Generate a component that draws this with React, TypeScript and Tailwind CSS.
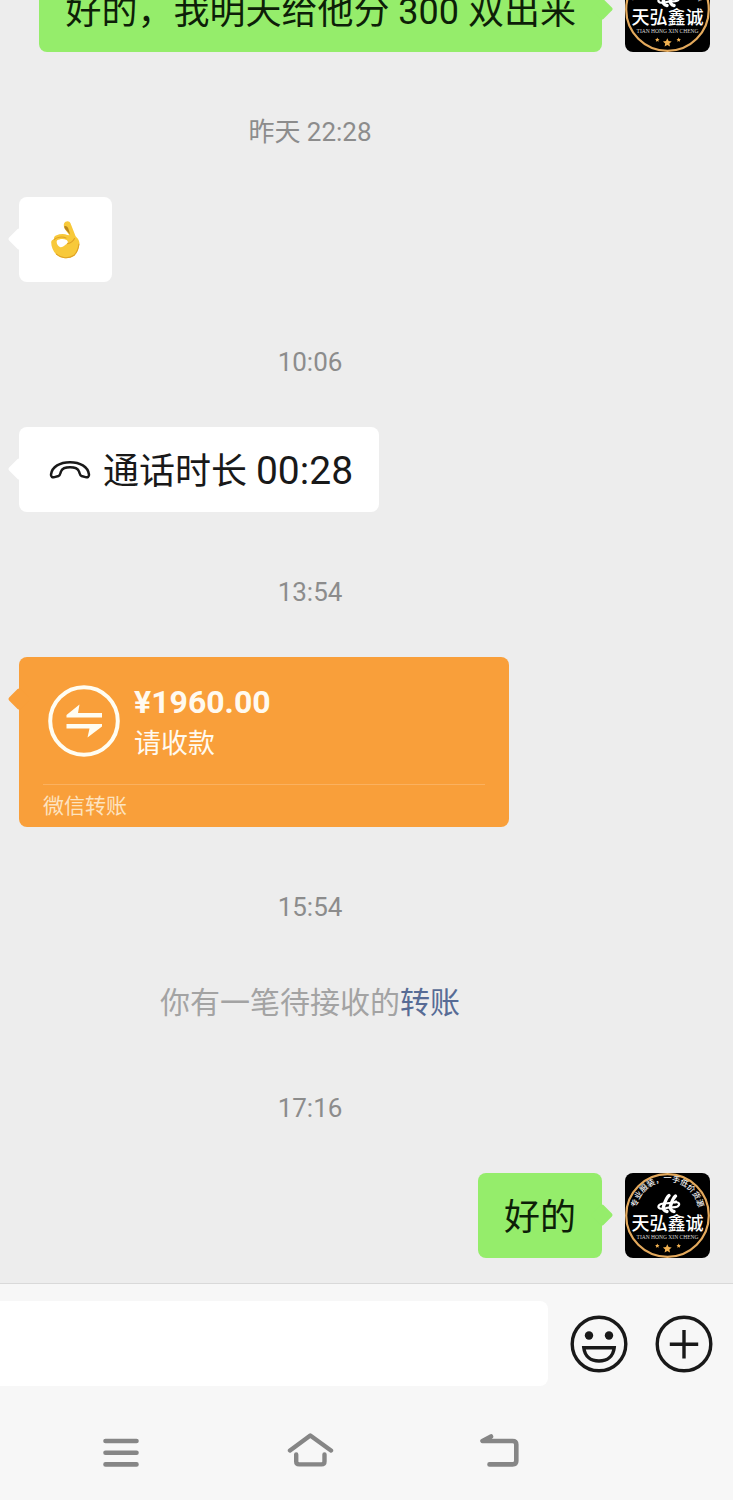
import type { ReactNode } from "react";

const sans = "font-[Roboto,'Noto_Sans_CJK_SC',sans-serif]";

function Avatar({ id }: { id: string }) {
  return (
    <svg viewBox="0 0 85 85" className="size-[85px] shrink-0 rounded-lg bg-black" role="img" aria-label="天弘鑫诚">
      <circle cx="42.5" cy="42.5" r="41.3" fill="none" stroke="#e3a95c" strokeWidth="2.2" />
      <path id={id} d="M12.2 46 A31 31 0 1 1 72.8 46" fill="none" />
      <text fill="#f0f0f0" fontSize="8" fontWeight="500">
        <textPath href={`#${id}`} startOffset="50%" textAnchor="middle">专业服装，一手低价货源</textPath>
      </text>
      <g fill="none" stroke="#fff" strokeLinecap="round" strokeLinejoin="round">
        <path d="M44 22.500C41 25 40 29 38.500 33.500C37.800 36 39 38 42 38.500" strokeWidth="3.400" />
        <path d="M50.500 23C47.500 25.500 47 29 45.500 33C45 35.500 46 38 49 38.500" strokeWidth="3.400" />
        <path d="M38 35.500C34 36.500 32 34 34.500 31.800C38 29 45 31.500 51 28.500" strokeWidth="2.200" />
        <path d="M50 29.500C54 28.500 55.500 31.500 52.500 33.500C50 35 46 34 41 35" strokeWidth="2.200" />
      </g>
      <text x="42.5" y="57" textAnchor="middle" fill="#fff" fontSize="18" fontWeight="500">天弘鑫诚</text>
      <text x="42.5" y="66" textAnchor="middle" fill="#d8d8d8" fontSize="5.5" className="font-['Liberation_Serif',serif]">
        TIAN HONG XIN CHENG
      </text>
      <g fill="#f0b050">
        <path d="M42.3 71.2l1.300 2.900 3.100.3-2.300 2.100.6 3.100-2.700-1.600-2.700 1.600.6-3.100-2.300-2.100 3.100-.3z" />
        <path d="M32.3 70.6l.7 1.400 1.500.2-1.100 1 .3 1.500-1.400-.8-1.400.8.3-1.500-1.100-1 1.500-.2z" />
        <path d="M53.7 70.6l.7 1.400 1.500.2-1.100 1 .3 1.500-1.400-.8-1.400.8.3-1.500-1.100-1 1.500-.2z" />
      </g>
    </svg>
  );
}

function OkHand() {
  return (
    <svg viewBox="0 0 34 38" className="mr-[3px] h-[38px] w-[34px]" role="img" aria-label="OK">
      <path
        fillRule="evenodd"
        fill="#f8c93a"
        d="M16.500 .8C18.500-.4 20.800.3 21.500 2.300L26.600 15.200C28 16.700 30 18.500 30.400 21.500C30.300 26.500 28.500 31.500 25.500 34.500C19.500 38.800 11.500 37.800 7 33.200C4.200 30.200 2.200 26 2.200 21.300C2.300 19.500 3.500 18.600 5 18.600C4.700 16.500 5.300 15.100 7 14.400C11 12.700 15.500 12.500 18.300 14L20.300 14.200C19.500 12.300 17.500 10.500 16.200 8.400C14.500 6 14 2.500 16.500.8ZM8 19.500C6.800 22 9 25.800 11.500 26.200C14.500 26.500 15.400 24 17.500 23C19.200 22 19.300 20.300 17.600 19C14.500 17.400 10.500 17.800 8 19.500Z"
      />
      <path d="M15.300 5.200C17 4.400 18.600 5.500 19.300 7.500L21.200 13.500L16.500 8.500C15.700 7.400 15.200 6.300 15.300 5.200Z" fill="#b8851c" />
      <path
        d="M5 18.600C7.500 16.300 13 15 17 17M18.500 22.800C21.500 22 24 20.300 25.500 17.500M30 23C29.300 28 27.500 32 25 34.300C19.500 38 12 37.300 7.500 33.200"
        fill="none"
        stroke="#dfa226"
        strokeWidth="1.100"
        strokeLinecap="round"
      />
    </svg>
  );
}

function HandsetIcon() {
  return (
    <svg viewBox="0 0 42 20" className="h-5 w-[42px]" fill="none" stroke="#191919" strokeWidth="2.500" strokeLinejoin="round" aria-hidden="true">
      <path d="M2 14.500C3 6.500 11 2.200 21 2.200S39 6.500 40 14.500C40.300 17 38.600 17.600 36.500 17.100L32.500 16C30.500 15.300 30.800 13 29.800 11C28.800 8.700 25.500 7.300 21 7.300S13.200 8.700 12.200 11C11.200 13 11.500 15.300 9.500 16L5.500 17.100C3.400 17.600 1.700 17 2 14.500Z" />
    </svg>
  );
}

function TransferIcon() {
  return (
    <svg viewBox="0 0 72 72" className="size-[72px] shrink-0" aria-hidden="true">
      <circle cx="36" cy="36" r="33.800" fill="none" stroke="#fffdf2" strokeWidth="4" />
      <path d="M18.500 32.500V30L31.500 19.500L30 28H54V32.500Z" fill="#fffdf2" />
      <path d="M54 39V41.500L39.500 52.500L41.500 43.500H18.500V39Z" fill="#fffdf2" />
    </svg>
  );
}

function Time({ children }: { children: ReactNode }) {
  return (
    <p className="pt-[65px] pr-[113px] pb-[50px] text-center text-[26px] leading-[30px] text-[#8c8c8c]">{children}</p>
  );
}

function Tail({ className }: { className: string }) {
  return <span aria-hidden="true" className={`absolute top-[34px] size-4 rotate-45 rounded-xs ${className}`} />;
}

function Sent({ id, children }: { id: string; children: ReactNode }) {
  return (
    <div className="flex justify-end gap-[23px] pr-[23px] pl-5">
      <div className="relative flex min-h-[85px] items-center rounded-lg bg-[#95ed6b] px-[26px] pt-1 text-4xl text-[#0d1f08]">
        <Tail className="-right-2 bg-[#95ed6b]" />
        <p className="relative">{children}</p>
      </div>
      <Avatar id={id} />
    </div>
  );
}

function Received({ children }: { children: ReactNode }) {
  return (
    <div className="flex pr-10 pl-[19px]">
      <div className="relative flex min-h-[85px] items-center rounded-lg bg-white pr-[26px] pl-[30px] text-4xl text-[#191919]">
        <Tail className="-left-2 bg-white" />
        {children}
      </div>
    </div>
  );
}

function Transfer() {
  return (
    <div className="pr-10 pl-[19px]">
      <div className="relative w-full max-w-[490px] rounded-lg bg-[#f99f3a] px-6 text-[#fffaf0]">
        <Tail className="-left-2 bg-[#f99f3a]" />
        <div className="flex h-[128px] items-center gap-[14px] border-b border-[#fbb15f] pl-[5px]">
          <TransferIcon />
          <div className="pt-1">
            <p className="text-[32px] leading-10 font-bold">¥1960.00</p>
            <p className="mt-0.5 text-[27px] leading-10">请收款</p>
          </div>
        </div>
        <p className="h-[42px] text-[21px] leading-[42px] text-[#fde3c0]">微信转账</p>
      </div>
    </div>
  );
}

export default function App() {
  return (
    <div className={`flex h-screen flex-col bg-[#ededed] ${sans}`}>
      <main className="flex min-h-0 flex-1 flex-col-reverse overflow-y-auto [scrollbar-width:none]">
        <div className="pb-[25px]">
          <Sent id="arc-first">好的，我明天给他分 300 双出来</Sent>
          <Time>昨天 22:28</Time>
          <Received>
            <OkHand />
          </Received>
          <Time>10:06</Time>
          <Received>
            <HandsetIcon />
            <p className="ml-3 pt-1">
              通话时长 <span className="text-[39px] leading-10">00:28</span>
            </p>
          </Received>
          <Time>13:54</Time>
          <Transfer />
          <Time>15:54</Time>
          <p className="pt-[11px] pr-[113px] pb-[5px] text-center text-3xl leading-10 text-[#a3a3a3]">
            你有一笔待接收的
            <a href="#transfer" className="text-[#576b95]">转账</a>
          </p>
          <Time>17:16</Time>
          <Sent id="arc-last">好的</Sent>
        </div>
      </main>

      <footer className="border-t border-[#d9d9d9] bg-[#f7f7f7]">
        <form className="flex items-center pt-[17px] pr-5" onSubmit={(e) => e.preventDefault()}>
          <input aria-label="消息" className="h-[85px] min-w-0 flex-1 rounded-r-lg bg-white px-6 text-4xl outline-none" />
          <button type="button" aria-label="表情" className="ml-[22px] shrink-0">
            <svg viewBox="0 0 58 58" className="size-[58px]" fill="none" stroke="#191919" strokeWidth="3.400">
              <circle cx="29" cy="29" r="26.800" />
              <circle cx="19" cy="20.500" r="4.200" fill="#191919" stroke="none" />
              <circle cx="39" cy="20.500" r="4.200" fill="#191919" stroke="none" />
              <path d="M13.800 32.700H44.200C43.200 41.500 37 46 29 46S14.800 41.500 13.800 32.700Z" />
            </svg>
          </button>
          <button type="button" aria-label="更多" className="ml-[27px] shrink-0">
            <svg viewBox="0 0 58 58" className="size-[58px]" fill="none" stroke="#191919" strokeWidth="3.400">
              <circle cx="29" cy="29" r="26.800" />
              <path d="M29 15V43.500M14.800 29.200H43.200" />
            </svg>
          </button>
        </form>
        <nav className="grid grid-cols-3 justify-items-center pt-11 pr-[140px] pb-[30px] pl-[26px]">
          <button type="button" aria-label="最近任务">
            <svg viewBox="0 0 48 40" className="h-10 w-12" fill="none" stroke="#868686" strokeWidth="4.600" strokeLinecap="round">
              <path d="M8.500 11H39.500M8.500 22.700H39.500M8.500 34.400H39.500" />
            </svg>
          </button>
          <button type="button" aria-label="主屏幕">
            <svg viewBox="0 0 48 40" className="h-10 w-12" fill="none" stroke="#868686" strokeWidth="4.400" strokeLinecap="round" strokeLinejoin="round">
              <path d="M4 20.500L24.300 5.500L45 20.500M10.200 24.500V31.500Q10.200 34.400 13.200 34.400H35.500Q38.500 34.400 38.500 31.500V24.500" />
            </svg>
          </button>
          <button type="button" aria-label="返回">
            <svg viewBox="0 0 48 40" className="h-10 w-12" fill="none" stroke="#868686" strokeWidth="4.600" strokeLinecap="round" strokeLinejoin="round">
              <path d="M16 6.500L7.500 11H37.500Q41.300 11 41.300 14.500V31Q41.300 34.400 37.500 34.400H14.500" />
            </svg>
          </button>
        </nav>
      </footer>
    </div>
  );
}
